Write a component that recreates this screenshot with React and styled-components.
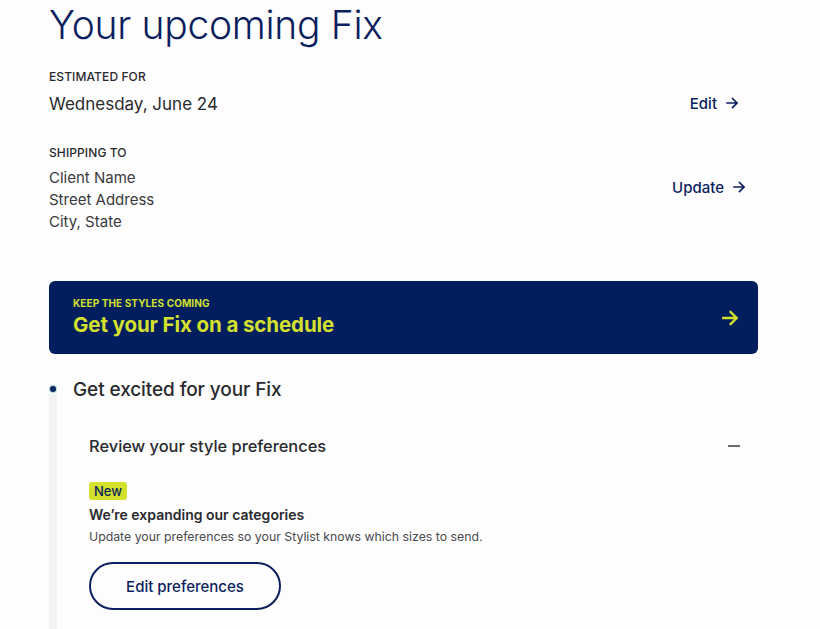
import React from 'react';
import styled, { createGlobalStyle } from 'styled-components';

const navy = '#0b1f5e';
const ink = '#2a2a2e';
const lime = '#d3e02c';

const GlobalStyle = createGlobalStyle`
  html, body {
    margin: 0;
    padding: 0;
    background: #fdfdfd;
  }
  body {
    font-family: Inter, "Open Sans", "Liberation Sans", sans-serif;
    color: ${ink};
    -webkit-font-smoothing: antialiased;
  }
`;

const ArrowRight = ({ size = 12, color = navy, stroke = 1.6 }) => (
  <svg width={size} height={size} viewBox="0 0 12 12" fill="none">
    <path d="M1 6h10M6.5 1.5L11 6l-4.5 4.5" stroke={color} strokeWidth={stroke} strokeLinecap="square" />
  </svg>
);

const Cursor = () => (
  <CursorWrap>
    <svg width="14" height="20" viewBox="0 0 14 20">
      <path d="M1 1v15l3.6-3.4 2.6 5.8 2.2-1-2.6-5.6H12z" fill="#111" stroke="#fff" strokeWidth="1" />
    </svg>
  </CursorWrap>
);

export default function App() {
  return (
    <Page>
      <GlobalStyle />
      <Title>Your upcoming Fix</Title>

      <InfoRow $top={21}>
        <div>
          <Label>Estimated for</Label>
          <DateText>Wednesday, June 24</DateText>
        </div>
        <ActionLink $pad={20}>
          Edit <ArrowRight />
        </ActionLink>
      </InfoRow>

      <InfoRow $top={30}>
        <div>
          <Label>Shipping to</Label>
          <Address>
            <span>Client Name</span>
            <span>Street Address</span>
            <span>City, State</span>
          </Address>
        </div>
        <ActionLink $pad={13} $offset={-4}>
          Update <ArrowRight />
        </ActionLink>
      </InfoRow>

      <Banner>
        <div>
          <BannerKicker>Keep the styles coming</BannerKicker>
          <BannerTitle>Get your Fix on a schedule</BannerTitle>
        </div>
        <ArrowRight size={16} color={lime} stroke={1.8} />
      </Banner>

      <Step>
        <Rail>
          <Dot />
          <RailBar />
        </Rail>
        <StepBody>
          <StepTitle>Get excited for your Fix</StepTitle>
          <Panel>
            <PanelHeader>
              <PanelTitle>Review your style preferences</PanelTitle>
              <Minus />
            </PanelHeader>
            <Badge>New</Badge>
            <NoticeTitle>We’re expanding our categories</NoticeTitle>
            <NoticeText>Update your preferences so your Stylist knows which sizes to send.</NoticeText>
            <OutlineButton>Edit preferences</OutlineButton>
          </Panel>
        </StepBody>
      </Step>

      <Cursor />
    </Page>
  );
}

const Page = styled.div`
  position: relative;
  height: 629px;
  overflow: hidden;
  padding-left: 49px;
  width: 709px;
`;

const Title = styled.h1`
  margin: 0;
  padding-top: 2px;
  font-size: 39px;
  line-height: 46px;
  font-weight: 300;
  color: ${navy};
  letter-spacing: -0.3px;
`;

const InfoRow = styled.div`
  display: flex;
  justify-content: space-between;
  align-items: center;
  margin-top: ${p => p.$top ?? 20}px;
`;

const Label = styled.div`
  font-size: 12px;
  line-height: 16px;
  font-weight: 500;
  text-transform: uppercase;
  color: ${ink};
  letter-spacing: 0.1px;
`;

const DateText = styled.div`
  margin-top: 8px;
  font-size: 17px;
  line-height: 22px;
  color: ${ink};
`;

const Address = styled.div`
  margin-top: 6px;
  display: flex;
  flex-direction: column;
  font-size: 15px;
  line-height: 22px;
  color: #3a3a3e;
`;

const ActionLink = styled.a`
  display: flex;
  align-items: center;
  gap: 9px;
  padding-right: ${p => p.$pad}px;
  margin-top: ${p => p.$offset ?? 22}px;
  font-size: 15px;
  font-weight: 500;
  color: ${navy};
  cursor: pointer;
`;

const Banner = styled.div`
  margin-top: 48px;
  height: 73px;
  box-sizing: border-box;
  padding: 0 20px 0 24px;
  display: flex;
  align-items: center;
  justify-content: space-between;
  background: #021e5f;
  border-radius: 6px;
`;

const BannerKicker = styled.div`
  font-size: 10px;
  line-height: 12px;
  font-weight: 700;
  text-transform: uppercase;
  color: ${lime};
  letter-spacing: 0.1px;
`;

const BannerTitle = styled.div`
  margin-top: 3px;
  font-size: 20.5px;
  line-height: 26px;
  font-weight: 700;
  color: ${lime};
  letter-spacing: -0.1px;
`;

const Step = styled.div`
  display: flex;
  gap: 16px;
  margin-top: 25px;
  min-height: 320px;
`;

const Rail = styled.div`
  width: 8px;
  display: flex;
  flex-direction: column;
  align-items: center;
  padding-top: 7px;
`;

const Dot = styled.span`
  width: 6px;
  height: 6px;
  border-radius: 50%;
  background: #06275f;
  box-shadow: 0 0 0 1px rgba(40, 140, 160, 0.35);
`;

const RailBar = styled.div`
  flex: 1;
  width: 8px;
  margin-top: 2px;
  background: #f2f2f2;
`;

const StepBody = styled.div`
  flex: 1;
`;

const StepTitle = styled.h2`
  margin: 0;
  font-size: 19px;
  line-height: 22px;
  font-weight: 500;
  color: ${ink};
  letter-spacing: -0.1px;
`;

const Panel = styled.div`
  padding: 35px 18px 0 16px;
`;

const PanelHeader = styled.div`
  display: flex;
  align-items: center;
  justify-content: space-between;
`;

const PanelTitle = styled.h3`
  margin: 0;
  font-size: 16.4px;
  line-height: 20px;
  font-weight: 500;
  color: ${ink};
`;

const Minus = styled.span`
  width: 12px;
  height: 1.5px;
  background: #6b6b70;
`;

const Badge = styled.span`
  display: inline-block;
  margin-top: 26px;
  padding: 0 5px;
  height: 18px;
  line-height: 18px;
  border-radius: 3px;
  background: ${lime};
  color: ${navy};
  font-size: 13px;
  font-weight: 500;
`;

const NoticeTitle = styled.div`
  margin-top: 6px;
  font-size: 14px;
  line-height: 18px;
  font-weight: 600;
  color: ${ink};
`;

const NoticeText = styled.div`
  margin-top: 4px;
  font-size: 12.3px;
  line-height: 17px;
  color: #4a4a4e;
`;

const OutlineButton = styled.button`
  margin-top: 17px;
  width: 192px;
  height: 48px;
  border: 2px solid ${navy};
  border-radius: 24px;
  background: transparent;
  font-family: inherit;
  font-size: 15px;
  font-weight: 500;
  color: ${navy};
  cursor: pointer;
`;

const CursorWrap = styled.div`
  position: absolute;
  left: 796px;
  top: 238px;
  line-height: 0;
`;
